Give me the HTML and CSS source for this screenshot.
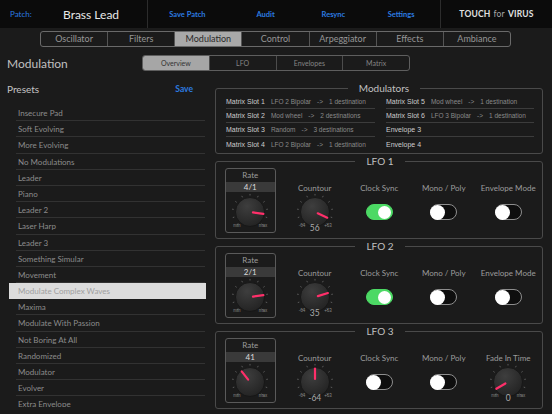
FILE: index.html
```html
<!DOCTYPE html>
<html lang="en">

<head>
  <meta charset="UTF-8">
  <meta name="viewport" content="width=device-width, initial-scale=1.0">
  <title>Touch for Virus - Modulation</title>
  <link rel="stylesheet" href="styles.css">
</head>

<body>

  <svg class="defs" width="0" height="0">
    <defs>
      <radialGradient id="knobFill" cx="40%" cy="30%" r="75%">
        <stop offset="0" stop-color="#3e3e3e" />
        <stop offset="1" stop-color="#222" />
      </radialGradient>
    </defs>
  </svg>

  <div class="topbar">
    <div class="patch">
      <span class="patch-label">Patch:</span>
      <span class="patch-name">Brass Lead</span>
    </div>
    <div class="top-actions">
      <span class="top-btn" style="width:79px">Save Patch</span>
      <span class="top-btn" style="width:78px">Audit</span>
      <span class="top-btn" style="width:58px">Resync</span>
      <span class="top-btn" style="width:78px">Settings</span>
    </div>
    <div class="brand"><b>TOUCH</b> <span>for</span> <b>VIRUS</b></div>
  </div>

  <div class="tabs">
    <span class="tab">Oscillator</span>
    <span class="tab">Filters</span>
    <span class="tab active">Modulation</span>
    <span class="tab">Control</span>
    <span class="tab">Arpeggiator</span>
    <span class="tab">Effects</span>
    <span class="tab">Ambiance</span>
  </div>

  <div class="page-head">
    <h1>Modulation</h1>
    <div class="subtabs">
      <span class="subtab active">Overview</span>
      <span class="subtab">LFO</span>
      <span class="subtab">Envelopes</span>
      <span class="subtab">Matrix</span>
    </div>
  </div>

  <div class="main">
    <div class="presets">
      <div class="presets-head">
        <span>Presets</span>
        <span class="save">Save</span>
      </div>
      <ul class="preset-list">
        <li>Insecure Pad</li>
        <li>Soft Evolving</li>
        <li>More Evolving</li>
        <li>No Modulations</li>
        <li>Leader</li>
        <li>Piano</li>
        <li>Leader 2</li>
        <li>Laser Harp</li>
        <li>Leader 3</li>
        <li>Something Simular</li>
        <li>Movement</li>
        <li class="selected">Modulate Complex Waves</li>
        <li>Maxima</li>
        <li>Modulate With Passion</li>
        <li>Not Boring At All</li>
        <li>Randomized</li>
        <li>Modulator</li>
        <li>Evolver</li>
        <li>Extra Envelope</li>
      </ul>
    </div>

    <div class="panels">
      <fieldset class="modulators">
        <legend>Modulators</legend>
        <div class="mcol">
          <div class="mrow"><span class="slot">Matrix Slot 1</span><span class="src">LFO 2 Bipolar</span><span class="src arrow">-&gt;</span><span class="src">1 destination</span></div>
          <div class="mrow"><span class="slot">Matrix Slot 2</span><span class="src">Mod wheel</span><span class="src arrow">-&gt;</span><span class="src">2 destinations</span></div>
          <div class="mrow"><span class="slot">Matrix Slot 3</span><span class="src">Random</span><span class="src arrow">-&gt;</span><span class="src">3 destinations</span></div>
          <div class="mrow"><span class="slot">Matrix Slot 4</span><span class="src">LFO 2 Bipolar</span><span class="src arrow">-&gt;</span><span class="src">1 destination</span></div>
        </div>
        <div class="mcol">
          <div class="mrow"><span class="slot">Matrix Slot 5</span><span class="src">Mod wheel</span><span class="src arrow">-&gt;</span><span class="src">1 destination</span></div>
          <div class="mrow"><span class="slot">Matrix Slot 6</span><span class="src">LFO 3 Bipolar</span><span class="src arrow">-&gt;</span><span class="src">1 destination</span></div>
          <div class="mrow"><span class="slot">Envelope 3</span></div>
          <div class="mrow"><span class="slot">Envelope 4</span></div>
        </div>
      </fieldset>

      <fieldset class="lfo">
        <legend>LFO 1</legend>
        <div class="lfo-row">
          <div class="ctl">
            <div class="rate-box">
              <div class="ctl-label">Rate</div>
              <div class="rate-value">4/1</div>
              <svg class="knob" width="50" height="39" data-cy="20" data-angle="98" data-lo="min" data-hi="max"></svg>
            </div>
          </div>
          <div class="ctl">
            <div class="ctl-label">Countour</div>
            <svg class="knob" width="50" height="32" data-cy="18" data-angle="115" data-lo="-64" data-hi="+63"></svg>
            <div class="knob-value">56</div>
          </div>
          <div class="ctl">
            <div class="ctl-label">Clock Sync</div>
            <span class="toggle on"><span class="thumb"></span></span>
          </div>
          <div class="ctl">
            <div class="ctl-label">Mono / Poly</div>
            <span class="toggle"><span class="thumb"></span></span>
          </div>
          <div class="ctl">
            <div class="ctl-label">Envelope Mode</div>
            <span class="toggle"><span class="thumb"></span></span>
          </div>
        </div>
      </fieldset>

      <fieldset class="lfo">
        <legend>LFO 2</legend>
        <div class="lfo-row">
          <div class="ctl">
            <div class="rate-box">
              <div class="ctl-label">Rate</div>
              <div class="rate-value">2/1</div>
              <svg class="knob" width="50" height="39" data-cy="20" data-angle="82" data-lo="min" data-hi="max"></svg>
            </div>
          </div>
          <div class="ctl">
            <div class="ctl-label">Countour</div>
            <svg class="knob" width="50" height="32" data-cy="18" data-angle="73" data-lo="-64" data-hi="+63"></svg>
            <div class="knob-value">35</div>
          </div>
          <div class="ctl">
            <div class="ctl-label">Clock Sync</div>
            <span class="toggle on"><span class="thumb"></span></span>
          </div>
          <div class="ctl">
            <div class="ctl-label">Mono / Poly</div>
            <span class="toggle"><span class="thumb"></span></span>
          </div>
          <div class="ctl">
            <div class="ctl-label">Envelope Mode</div>
            <span class="toggle"><span class="thumb"></span></span>
          </div>
        </div>
      </fieldset>

      <fieldset class="lfo">
        <legend>LFO 3</legend>
        <div class="lfo-row">
          <div class="ctl">
            <div class="rate-box">
              <div class="ctl-label">Rate</div>
              <div class="rate-value">41</div>
              <svg class="knob" width="50" height="39" data-cy="20" data-angle="-38" data-lo="min" data-hi="max"></svg>
            </div>
          </div>
          <div class="ctl">
            <div class="ctl-label">Countour</div>
            <svg class="knob" width="50" height="32" data-cy="18" data-angle="0" data-lo="-64" data-hi="+63"></svg>
            <div class="knob-value">-64</div>
          </div>
          <div class="ctl">
            <div class="ctl-label">Clock Sync</div>
            <span class="toggle"><span class="thumb"></span></span>
          </div>
          <div class="ctl">
            <div class="ctl-label">Mono / Poly</div>
            <span class="toggle"><span class="thumb"></span></span>
          </div>
          <div class="ctl">
            <div class="ctl-label">Fade In Time</div>
            <svg class="knob" width="50" height="32" data-cy="18" data-angle="-120" data-lo="min" data-hi="max"></svg>
            <div class="knob-value">0</div>
          </div>
        </div>
      </fieldset>
    </div>
  </div>

  <script>
    // draw every knob from its data-angle (degrees, clockwise from top)
    function polar(cx, cy, r, deg) {
      const a = deg * Math.PI / 180;
      return [(cx + r * Math.sin(a)).toFixed(2), (cy - r * Math.cos(a)).toFixed(2)];
    }

    document.querySelectorAll('.knob').forEach(knob => {
      const cx = 25;
      const cy = parseFloat(knob.dataset.cy);
      const r = 14.5;
      let out = '';

      for (let i = 0; i <= 10; i++) {
        const deg = -135 + i * 27;
        const [x1, y1] = polar(cx, cy, r + 2, deg);
        const [x2, y2] = polar(cx, cy, r + 3.6, deg);
        out += `<line x1="${x1}" y1="${y1}" x2="${x2}" y2="${y2}" stroke="#6b6b6b" stroke-width="0.8"/>`;
      }

      out += `<circle cx="${cx}" cy="${cy}" r="${r}" fill="url(#knobFill)" stroke="#141414" stroke-width="0.8"/>`;

      const angle = parseFloat(knob.dataset.angle);
      const [px1, py1] = polar(cx, cy, 3, angle);
      const [px2, py2] = polar(cx, cy, 13.5, angle);
      out += `<line x1="${px1}" y1="${py1}" x2="${px2}" y2="${py2}" stroke="#ff2f6a" stroke-width="2.2" stroke-linecap="round"/>`;

      out += `<text x="${cx - 13}" y="${cy + 14.5}" class="scale">${knob.dataset.lo}</text>`;
      out += `<text x="${cx + 13}" y="${cy + 14.5}" class="scale">${knob.dataset.hi}</text>`;

      knob.innerHTML = out;
    });
  </script>

</body>

</html>
```

FILE: styles.css
```css
* {
  box-sizing: border-box;
}

body {
  margin: 0;
  width: 552px;
  height: 414px;
  overflow: hidden;
  background-color: #1b1b1b;
  color: #b8b8b8;
  font-family: Lato, "Liberation Sans", sans-serif;
}

.defs {
  position: absolute;
}

/* top bar */
.topbar {
  display: flex;
  height: 28px;
  background-color: #0b0b0b;
}

.patch {
  width: 148px;
  display: flex;
  align-items: center;
  border-right: 1px solid #2c2c2c;
}

.patch-label {
  width: 53px;
  margin-left: 10px;
  font-size: 8px;
  color: #2c7be0;
}

.patch-name {
  font-size: 12px;
  color: #e8e8e8;
}

.top-actions {
  display: flex;
  width: 293px;
  border-right: 1px solid #2c2c2c;
}

.top-btn {
  display: flex;
  align-items: center;
  justify-content: center;
  font-size: 7.5px;
  font-weight: bold;
  color: #2c7be0;
}

.brand {
  flex: 1;
  display: flex;
  align-items: center;
  justify-content: center;
  gap: 3px;
  font-size: 8.5px;
  color: #e0e0e0;
  letter-spacing: 0.2px;
}

.brand span {
  color: #a8a8a8;
}

/* main tabs */
.tabs {
  display: flex;
  width: 471px;
  height: 16px;
  margin: 3px 0 0 40px;
  border: 1px solid #6a6a6a;
  border-radius: 3px;
  overflow: hidden;
}

.tab {
  flex: 1;
  text-align: center;
  font-size: 9px;
  line-height: 14px;
  color: #969696;
  border-left: 1px solid #555;
}

.tab:first-child {
  border-left: none;
}

.tab.active {
  background-color: #a9a9a9;
  color: #2a2a2a;
}

/* page header */
.page-head {
  display: flex;
  align-items: center;
  height: 16px;
  margin-top: 8px;
}

.page-head h1 {
  width: 142px;
  margin: 0;
  padding-left: 7px;
  font-size: 12px;
  font-weight: normal;
  color: #c0c0c0;
}

.subtabs {
  display: flex;
  width: 268px;
  height: 16px;
  border: 1px solid #5e5e5e;
  border-radius: 3px;
  overflow: hidden;
}

.subtab {
  flex: 1;
  text-align: center;
  font-size: 7px;
  line-height: 14px;
  color: #858585;
  border-left: 1px solid #4c4c4c;
}

.subtab:first-child {
  border-left: none;
}

.subtab.active {
  background-color: #a6a6a6;
  color: #333;
}

/* layout */
.main {
  display: flex;
}

.presets {
  width: 210px;
}

.presets-head {
  display: flex;
  justify-content: space-between;
  margin-top: 11px;
  padding: 0 17px 0 7px;
  font-size: 10px;
  line-height: 14px;
  color: #c4c4c4;
}

.save {
  font-size: 8.5px;
  font-weight: bold;
  color: #2c7be0;
}

.preset-list {
  list-style: none;
  width: 197px;
  height: 302px;
  margin: 9px 0 0 9px;
  padding: 0;
  overflow: hidden;
}

.preset-list li {
  height: 16.2px;
  line-height: 16.2px;
  padding-left: 9px;
  font-size: 8px;
  color: #8c8c8c;
  background: linear-gradient(#323232, #323232) no-repeat 7px 100% / calc(100% - 8px) 1px;
}

.preset-list li.selected {
  background: #dcdcdc;
  color: #a0a0a0;
}

.panels {
  width: 328px;
  margin-left: 5px;
}

fieldset {
  min-width: 0;
  margin: 0;
  border: 1px solid #4a4a4a;
  border-radius: 3px;
}

legend {
  margin: 0 auto;
  padding: 0 11px;
  font-size: 10px;
  line-height: 13px;
  color: #c0c0c0;
}

/* modulators */
.modulators {
  display: flex;
  gap: 11px;
  margin-top: 11px;
  padding: 0 0 2px 10px;
}

.mcol {
  width: 149px;
}

.mcol + .mcol {
  width: 148px;
}

.mrow {
  display: flex;
  align-items: center;
  height: 14px;
  white-space: nowrap;
  font-family: "Liberation Sans", sans-serif;
}

.mrow:not(:last-child) {
  border-bottom: 1px solid #3c3c3c;
}

.slot {
  margin-right: 6px;
  font-size: 7px;
  color: #cccccc;
}

.src {
  font-size: 6.5px;
  color: #8a8a8a;
}

.arrow {
  margin: 0 6px;
}

/* LFO panels */
.lfo {
  margin-top: 1px;
  padding: 0 0 5px 2px;
}

.lfo-row {
  display: flex;
  height: 65px;
}

.ctl {
  width: 64.5px;
  display: flex;
  flex-direction: column;
  align-items: center;
}

.ctl-label {
  margin-top: 15px;
  font-size: 8px;
  line-height: 11px;
  color: #9c9c9c;
  white-space: nowrap;
}

.rate-box {
  width: 51px;
  height: 65px;
  display: flex;
  flex-direction: column;
  align-items: center;
  border: 1px solid #5a5a5a;
  border-radius: 3px;
}

.rate-box .ctl-label {
  margin-top: 0;
  line-height: 13px;
}

.rate-value {
  align-self: stretch;
  background-color: #3a3a3a;
  text-align: center;
  font-size: 8px;
  line-height: 10px;
  color: #dadada;
}

.knob {
  overflow: visible;
}

.knob .scale {
  font-family: "Liberation Sans", sans-serif;
  font-size: 4.5px;
  fill: #8a8a8a;
  text-anchor: middle;
}

.knob-value {
  margin-top: -3px;
  font-size: 8.5px;
  line-height: 10px;
  color: #ababab;
}

.toggle {
  display: flex;
  align-items: center;
  width: 27px;
  height: 16px;
  margin-top: 10px;
  border: 1px solid #8e8e8e;
  border-radius: 8px;
  background-color: #0e0e0e;
}

.thumb {
  width: 15px;
  height: 15px;
  margin-left: -1px;
  border-radius: 50%;
  background-color: #fff;
}

.toggle.on {
  justify-content: flex-end;
  border-color: #4cd964;
  background-color: #4cd964;
}

.toggle.on .thumb {
  width: 13px;
  height: 13px;
  margin: 0 1px 0 0;
}
```
